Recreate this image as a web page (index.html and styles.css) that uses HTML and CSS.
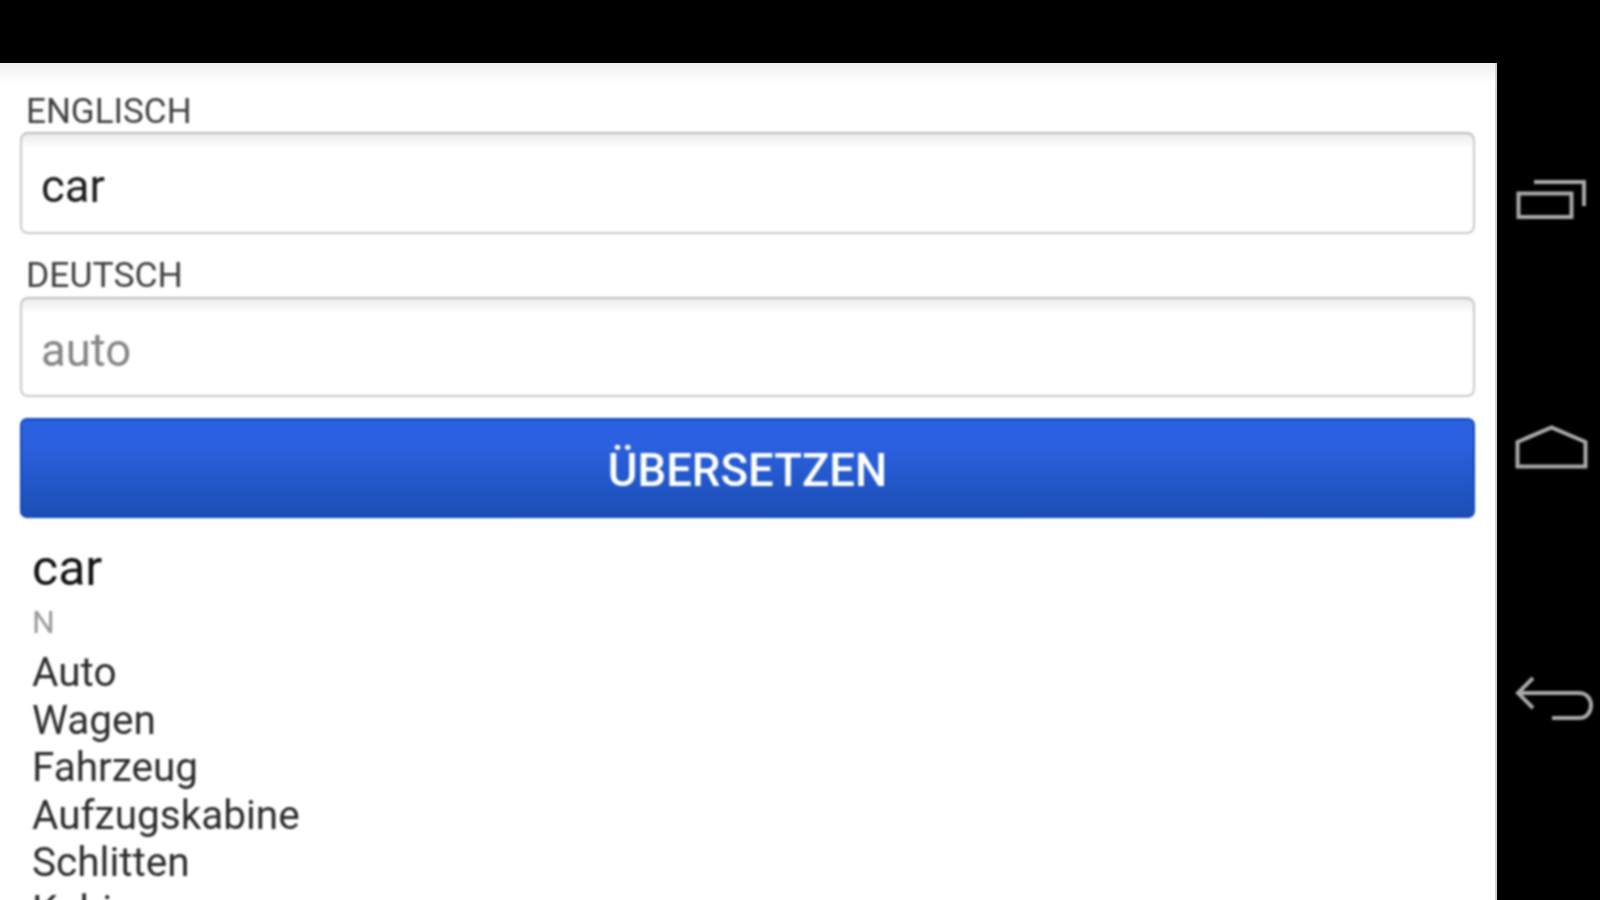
FILE: index.html
```html
<!DOCTYPE html>
<html lang="de">
<head>
<meta charset="utf-8">
<title>Wörterbuch</title>
<link rel="stylesheet" href="styles.css">
</head>
<body>
<div class="screen">
  <div class="status-bar"></div>
  <div class="body-row">
    <main class="panel">
      <label class="field-label">ENGLISCH</label>
      <div class="field field-top"><span class="value">car</span></div>
      <label class="field-label second">DEUTSCH</label>
      <div class="field field-bottom"><span class="placeholder">auto</span></div>
      <div class="button">ÜBERSETZEN</div>
      <section class="result">
        <div class="word">car</div>
        <div class="pos">N</div>
        <ul class="list">
          <li>Auto</li>
          <li>Wagen</li>
          <li>Fahrzeug</li>
          <li>Aufzugskabine</li>
          <li>Schlitten</li>
          <li>Kabine</li>
        </ul>
      </section>
    </main>
    <nav class="nav">
      <svg class="nav-icon" viewBox="1497 82 103 245"><path d="M1518.500 193.500H1571.500V217H1518.500Z M1534 182H1584V206"/></svg>
      <svg class="nav-icon" viewBox="1497 327 103 245"><path d="M1517.500 466.500H1585.500V442L1551.500 427.500L1517.500 442Z"/></svg>
      <svg class="nav-icon" viewBox="1497 572 103 245"><path d="M1533 678L1518 693L1533 708M1518 693H1579C1595 693 1595 718 1579 718H1552"/></svg>
    </nav>
  </div>
</div>
</body>
</html>
```
FILE: styles.css
```css
* { box-sizing: border-box; }
html, body { margin: 0; height: 100%; background: #000; overflow: hidden; }
.screen {
  width: 1600px;
  height: 900px;
  display: flex;
  flex-direction: column;
  background: #000;
  font-family: Roboto, "Liberation Sans", sans-serif;
  overflow: hidden;
}
.status-bar { height: 63px; flex: none; background: #000; }
.body-row { flex: 1; display: flex; min-height: 0; }
.panel {
  width: 1497px;
  flex: none;
  padding: 28px 20px 0 20px;
  background: linear-gradient(#f0f0f0, #fff 20px);
  border-right: 2px solid #d4d4d4;
  overflow: hidden;
}
.field-label {
  display: block;
  height: 41px;
  padding-left: 6px;
  font-size: 35px;
  line-height: 42px;
  color: #404040;
  filter: blur(0.9px);
}
.field-label.second { height: 43px; margin-top: 20px; font-size: 35.500px; }
.field {
  height: 102px;
  padding: 7px 0 0 19px;
  border: 2px solid #c8c8c8;
  border-top-color: #bdbdbd;
  border-radius: 8px;
  background: linear-gradient(#ececec, #fff 14px);
  font-size: 45.500px;
  display: flex;
  align-items: center;
  filter: blur(0.8px);
}
.field-bottom { height: 100px; }
.value { color: #1c1c1c; }
.placeholder { color: #858585; }
.button {
  height: 100px;
  margin-top: 21px;
  padding-top: 4px;
  border: 2px solid #0f48bd;
  border-radius: 7px;
  background: linear-gradient(#2b60e0 25%, #1b4fb4);
  color: #fff;
  font-size: 45.500px;
  font-weight: 500;
  display: flex;
  align-items: center;
  justify-content: center;
  filter: blur(0.8px);
}
.result { padding: 20px 0 0 12px; filter: blur(0.9px); }
.word { font-size: 50px; line-height: 60px; color: #111; }
.pos { font-size: 32px; line-height: 40px; margin-top: 4px; color: #999; }
.list { list-style: none; margin: 7px 0 0; padding: 0; }
.list li { font-size: 40.500px; line-height: 47.500px; color: #2c2c2c; }
.nav {
  flex: 1;
  padding-top: 19px;
  display: flex;
  flex-direction: column;
}
.nav-icon {
  display: block;
  width: 103px;
  height: 245px;
  flex: none;
  fill: none;
  stroke: #a8a8a8;
  stroke-width: 4;
  filter: blur(0.8px);
}
```
